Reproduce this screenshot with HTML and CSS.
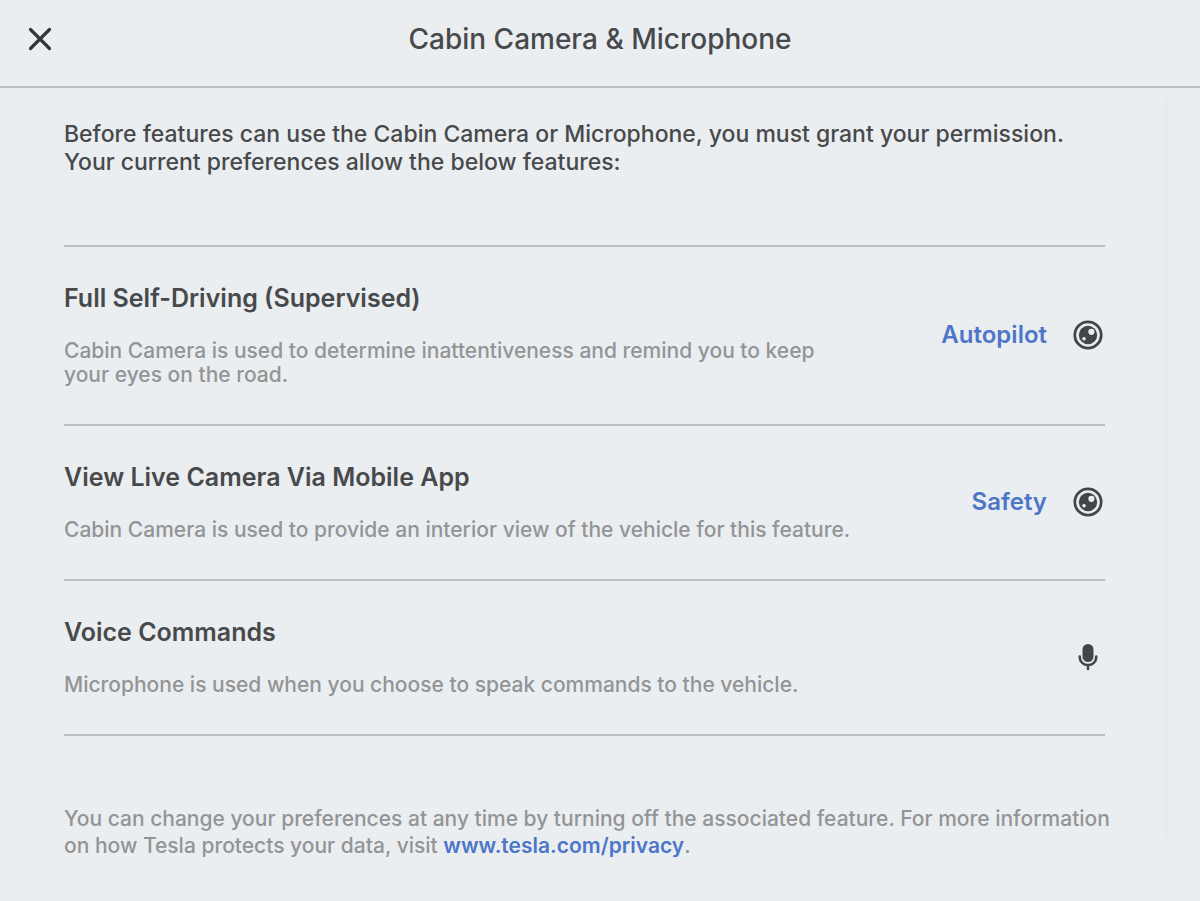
FILE: index.html
```html
<!doctype html>
<html lang="en">
  <head>
    <meta charset="UTF-8" />
    <meta name="viewport" content="width=device-width, initial-scale=1.0" />
    <title>Cabin Camera &amp; Microphone</title>
    <link rel="stylesheet" href="styles.css">
  </head>
  <body>
    <header class="header">
      <button class="close" type="button" aria-label="Close">
        <svg width="24" height="24" viewBox="0 0 24 24">
          <path d="M2.5 2.5L21.5 21.5M21.5 2.5L2.5 21.5" />
        </svg>
      </button>
      <h1>Cabin Camera &amp; Microphone</h1>
    </header>

    <main class="content">
      <p class="intro">
        Before features can use the Cabin Camera or Microphone, you must grant your permission.<br>
        Your current preferences allow the below features:
      </p>

      <ul class="features">
        <li class="feature">
          <div class="text">
            <h2>Full Self-Driving (Supervised)</h2>
            <p>Cabin Camera is used to determine inattentiveness and remind you to keep your eyes on the road.</p>
          </div>
          <a class="link" href="#autopilot">Autopilot</a>
          <svg class="icon" viewBox="0 0 34 34" role="img" aria-label="Camera">
            <circle class="ring" cx="17" cy="17" r="13.2" />
            <circle class="lens" cx="17" cy="17" r="9.2" />
            <circle class="glint" cx="20.4" cy="13.8" r="3.1" />
            <circle class="glint" cx="13" cy="20.8" r="1.8" />
          </svg>
        </li>

        <li class="feature">
          <div class="text">
            <h2>View Live Camera Via Mobile App</h2>
            <p>Cabin Camera is used to provide an interior view of the vehicle for this feature.</p>
          </div>
          <a class="link" href="#safety">Safety</a>
          <svg class="icon" viewBox="0 0 34 34" role="img" aria-label="Camera">
            <circle class="ring" cx="17" cy="17" r="13.2" />
            <circle class="lens" cx="17" cy="17" r="9.2" />
            <circle class="glint" cx="20.4" cy="13.8" r="3.1" />
            <circle class="glint" cx="13" cy="20.8" r="1.8" />
          </svg>
        </li>

        <li class="feature">
          <div class="text">
            <h2>Voice Commands</h2>
            <p>Microphone is used when you choose to speak commands to the vehicle.</p>
          </div>
          <svg class="icon" viewBox="0 0 34 34" role="img" aria-label="Microphone">
            <rect class="mic" x="11.5" y="4" width="11" height="18" rx="5.5" />
            <path class="stand" d="M8.8 16.5V17.5A8.2 7.6 0 0 0 25.2 17.5V16.5M17 25V29" />
          </svg>
        </li>
      </ul>

      <p class="note">
        You can change your preferences at any time by turning off the associated feature. For more information<br>
        on how Tesla protects your data, visit <a href="#privacy">www.tesla.com/privacy</a>.
      </p>
      <div class="scrollbar"></div>
    </main>
  </body>
</html>
```
FILE: styles.css
```css
* {
  box-sizing: border-box;
}

body {
  margin: 0;
  font-family: Inter, "Liberation Sans", sans-serif;
  font-weight: 500;
  color: #48494b;
  background-color: #eaeef1;
}

h1,
h2,
p,
ul {
  margin: 0;
  padding: 0;
}

a {
  color: #4d76c9;
  font-weight: 600;
  text-decoration: none;
}

.header {
  display: grid;
  grid-template-columns: 80px 1fr 80px;
  align-items: center;
  padding: 0 0 8px;
  height: 88px;
  border-bottom: 2px solid #b9bec1;
}

.header h1 {
  font-size: 28px;
  line-height: 32px;
  font-weight: 500;
  text-align: center;
}

.close {
  display: flex;
  justify-content: center;
  padding: 8px;
  border: none;
  background: none;
  cursor: pointer;
}

.close path {
  fill: none;
  stroke: #343638;
  stroke-width: 3.2;
  stroke-linecap: round;
}

.content {
  position: relative;
  padding: 32px 95px 40px 64px;
}

.intro {
  margin-bottom: 69px;
  font-size: 23px;
  line-height: 28px;
}

.features {
  list-style: none;
  border-top: 2px solid #b9bec1;
}

.feature {
  display: flex;
  align-items: center;
  padding: 35px 0 37px;
  border-bottom: 2px solid #b9bec1;
}

.text {
  flex: 1;
}

.text h2 {
  margin-bottom: 25px;
  font-size: 25px;
  line-height: 32px;
  font-weight: 600;
}

.text p {
  max-width: 790px;
  font-size: 21px;
  line-height: 24px;
  color: #929496;
}

.link {
  font-size: 24px;
  line-height: 32px;
}

.icon {
  width: 34px;
  height: 34px;
  margin-left: 24px;
}

.ring {
  fill: none;
  stroke: #444547;
  stroke-width: 2.8;
}

.lens,
.mic {
  fill: #444547;
}

.glint {
  fill: #eaeef1;
}

.stand {
  fill: none;
  stroke: #444547;
  stroke-width: 2.6;
  stroke-linecap: round;
}

.note {
  margin-top: 69px;
  margin-right: -8px;
  font-size: 21px;
  line-height: 27px;
  color: #929496;
}

.scrollbar {
  position: absolute;
  top: 10px;
  right: 32px;
  bottom: 60px;
  width: 5px;
  border-radius: 3px;
  background-color: #e7ebee;
}
```
